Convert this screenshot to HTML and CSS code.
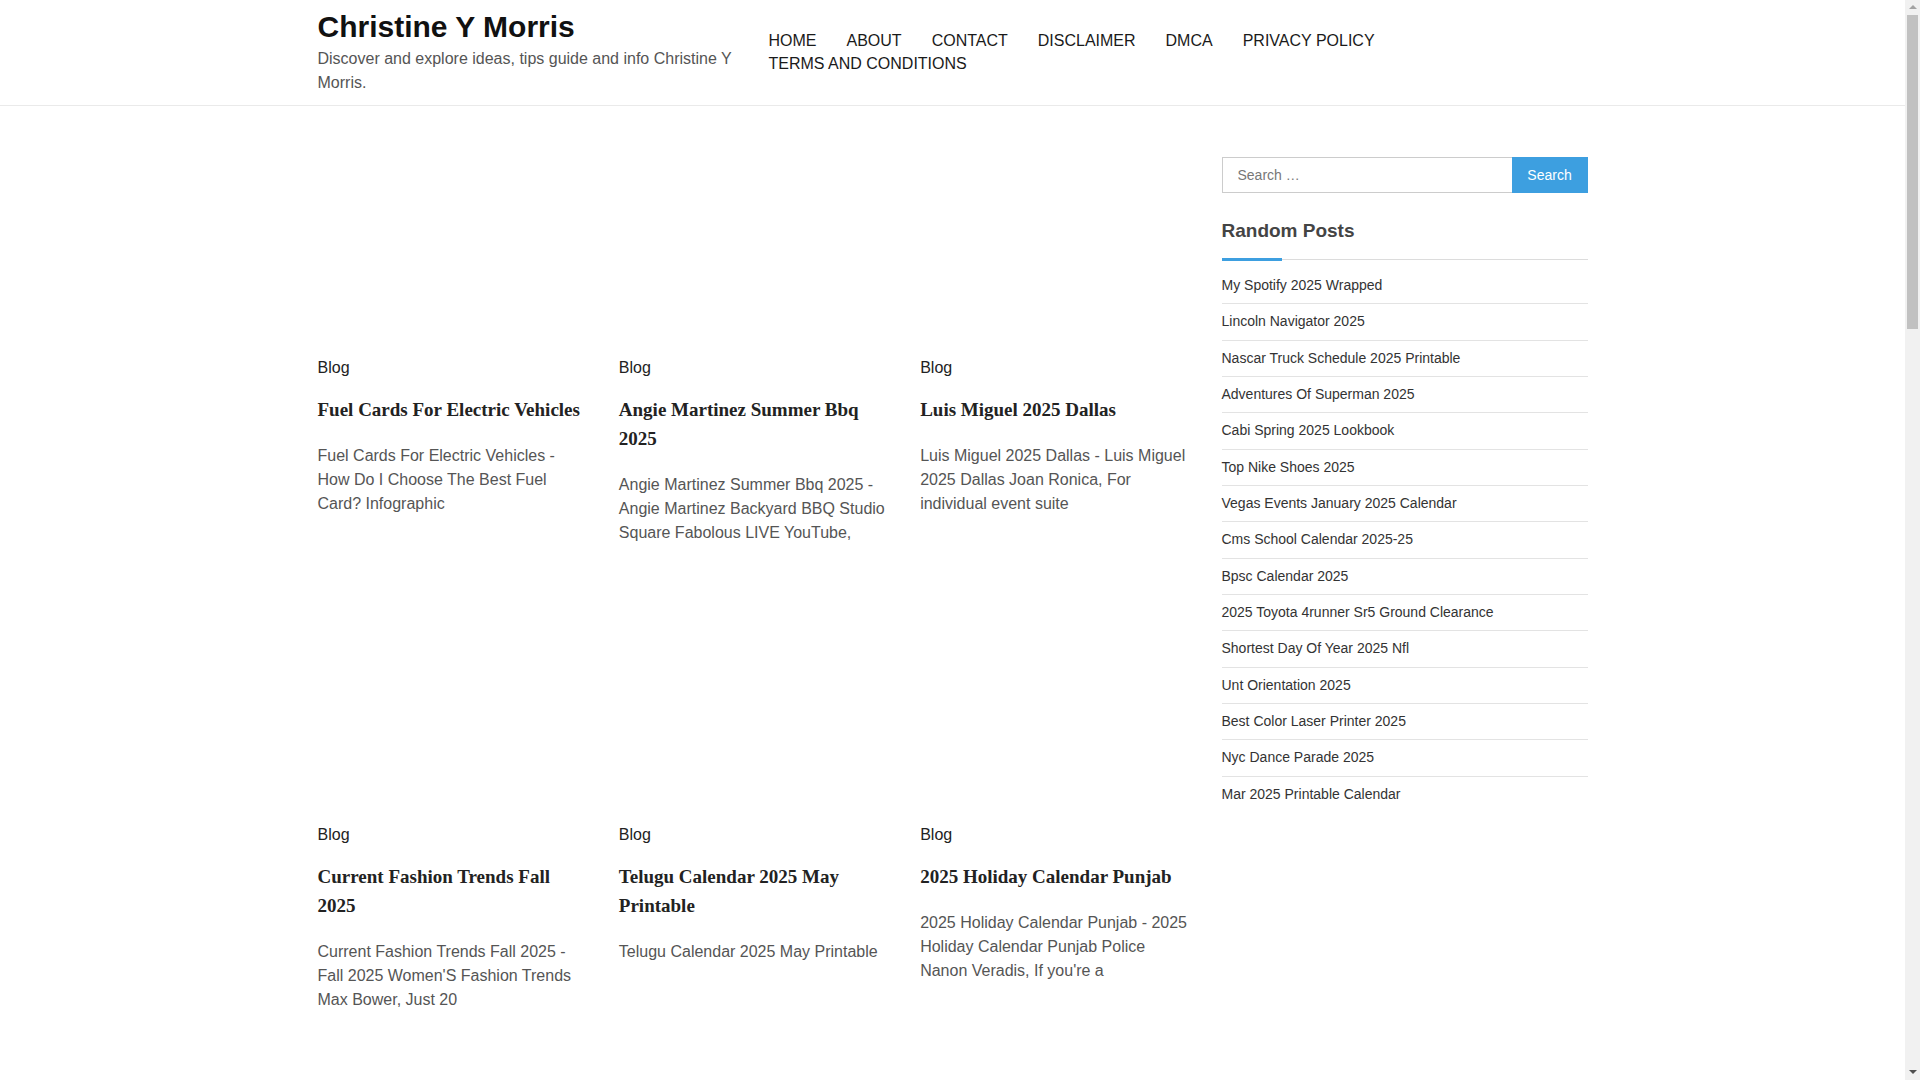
FILE: index.html
```html
<!DOCTYPE html>
<html lang="en">
<head>
<meta charset="utf-8">
<title>Christine Y Morris</title>
<link rel="stylesheet" href="styles.css">
</head>
<body>
<div class="page">
<header class="site-header">
  <div class="header-inner">
    <div class="branding">
      <p class="site-title">Christine Y Morris</p>
      <p class="site-desc">Discover and explore ideas, tips guide and info Christine Y Morris.</p>
    </div>
    <nav class="main-nav">
      <ul>
        <li>HOME</li>
        <li>ABOUT</li>
        <li>CONTACT</li>
        <li>DISCLAIMER</li>
        <li>DMCA</li>
        <li>PRIVACY POLICY</li>
        <li>TERMS AND CONDITIONS</li>
      </ul>
    </nav>
  </div>
</header>

<div class="site-content">
  <main class="posts">
    <article class="post">
      <div class="thumb"></div>
      <div class="cat">Blog</div>
      <h2 class="entry-title">Fuel Cards For Electric Vehicles</h2>
      <p class="excerpt">Fuel Cards For Electric Vehicles - How Do I Choose The Best Fuel Card? Infographic</p>
    </article>
    <article class="post">
      <div class="thumb"></div>
      <div class="cat">Blog</div>
      <h2 class="entry-title">Angie Martinez Summer Bbq 2025</h2>
      <p class="excerpt">Angie Martinez Summer Bbq 2025 - Angie Martinez Backyard BBQ Studio Square Fabolous LIVE YouTube,</p>
    </article>
    <article class="post">
      <div class="thumb"></div>
      <div class="cat">Blog</div>
      <h2 class="entry-title">Luis Miguel 2025 Dallas</h2>
      <p class="excerpt">Luis Miguel 2025 Dallas - Luis Miguel 2025 Dallas Joan Ronica, For individual event suite</p>
    </article>
    <article class="post">
      <div class="thumb"></div>
      <div class="cat">Blog</div>
      <h2 class="entry-title">Current Fashion Trends Fall 2025</h2>
      <p class="excerpt">Current Fashion Trends Fall 2025 - Fall 2025 Women'S Fashion Trends Max Bower, Just 20</p>
    </article>
    <article class="post">
      <div class="thumb"></div>
      <div class="cat">Blog</div>
      <h2 class="entry-title">Telugu Calendar 2025 May Printable</h2>
      <p class="excerpt">Telugu Calendar 2025 May Printable</p>
    </article>
    <article class="post">
      <div class="thumb"></div>
      <div class="cat">Blog</div>
      <h2 class="entry-title">2025 Holiday Calendar Punjab</h2>
      <p class="excerpt">2025 Holiday Calendar Punjab - 2025 Holiday Calendar Punjab Police Nanon Veradis, If you're a</p>
    </article>
  </main>

  <aside class="sidebar">
    <form class="search-form">
      <input class="search-field" type="search" placeholder="Search …">
      <button class="search-submit" type="button">Search</button>
    </form>
    <section class="widget">
      <h3 class="widget-title">Random Posts</h3>
      <ul class="widget-list">
        <li>My Spotify 2025 Wrapped</li>
        <li>Lincoln Navigator 2025</li>
        <li>Nascar Truck Schedule 2025 Printable</li>
        <li>Adventures Of Superman 2025</li>
        <li>Cabi Spring 2025 Lookbook</li>
        <li>Top Nike Shoes 2025</li>
        <li>Vegas Events January 2025 Calendar</li>
        <li>Cms School Calendar 2025-25</li>
        <li>Bpsc Calendar 2025</li>
        <li>2025 Toyota 4runner Sr5 Ground Clearance</li>
        <li>Shortest Day Of Year 2025 Nfl</li>
        <li>Unt Orientation 2025</li>
        <li>Best Color Laser Printer 2025</li>
        <li>Nyc Dance Parade 2025</li>
        <li>Mar 2025 Printable Calendar</li>
      </ul>
    </section>
  </aside>
</div>
</div>

<div class="fake-scrollbar" aria-hidden="true">
  <span class="sb-arrow sb-up"></span>
  <span class="sb-thumb"></span>
  <span class="sb-arrow sb-down"></span>
</div>
</body>
</html>
```

FILE: styles.css
```css
* {
  box-sizing: border-box;
}

html, body {
  margin: 0;
  padding: 0;
  background: #fff;
}

body {
  font-family: "Liberation Sans", Arial, sans-serif;
  font-size: 16px;
  line-height: 24px;
  color: #222;
}

.page {
  margin-right: 15px;
}

/* Header */
.site-header {
  border-bottom: 1px solid #eaeaea;
}

.header-inner {
  max-width: 1300px;
  margin: 0 auto;
  padding: 9px 15px 10px;
  display: flex;
  align-items: center;
}

.branding {
  flex: none;
  width: 445px;
}

.site-title {
  margin: 0;
  font-size: 30px;
  line-height: 36px;
  font-weight: bold;
  color: #111;
}

.site-desc {
  margin: 2px 0 0;
  font-size: 16px;
  line-height: 24px;
  color: #555;
}

.main-nav {
  flex: 1;
  margin-left: 6px;
}

.main-nav ul {
  list-style: none;
  margin: 0;
  padding: 0;
  display: flex;
  flex-wrap: wrap;
}

.main-nav li {
  margin-right: 30px;
  font-size: 16px;
  line-height: 23px;
  color: #1a1a1a;
}

/* Content */
.site-content {
  max-width: 1300px;
  margin: 0 auto;
  padding: 51px 15px 0;
  display: grid;
  grid-template-columns: 1fr 366px;
  column-gap: 30px;
  align-items: start;
  min-height: 3500px;
}

.posts {
  display: grid;
  grid-template-columns: repeat(3, 1fr);
  column-gap: 30px;
  row-gap: 79px;
  align-items: start;
}

.thumb {
  height: 199px;
}

.cat {
  font-size: 16px;
  line-height: 24px;
  color: #222;
}

.entry-title {
  margin: 15px 0 20px;
  font-family: "Liberation Serif", "Times New Roman", serif;
  font-size: 19px;
  line-height: 29px;
  font-weight: bold;
  color: #222;
}

.excerpt {
  margin: 0;
  font-size: 16px;
  line-height: 24px;
  color: #555;
}

/* Sidebar */
.search-form {
  display: flex;
  height: 36px;
}

.search-field {
  flex: 1;
  min-width: 0;
  height: 36px;
  margin: 0;
  padding: 0 15px;
  border: 1px solid #ccc;
  border-right: none;
  border-radius: 0;
  font-family: "Liberation Sans", Arial, sans-serif;
  font-size: 14px;
  color: #333;
  background: #fff;
  outline: none;
  -webkit-appearance: none;
}

.search-field::placeholder {
  color: #777;
}

.search-submit {
  flex: none;
  width: 76px;
  height: 36px;
  margin: 0;
  padding: 0;
  border: none;
  border-radius: 0;
  background: #3d9fe0;
  color: #fff;
  font-family: "Liberation Sans", Arial, sans-serif;
  font-size: 14px;
}

.widget {
  margin-top: 24px;
}

.widget-title {
  position: relative;
  margin: 0;
  padding-bottom: 14px;
  font-size: 19px;
  line-height: 28px;
  font-weight: bold;
  color: #444;
  border-bottom: 1px solid #dcdcdc;
}

.widget-title::after {
  content: "";
  position: absolute;
  left: 0;
  bottom: -2px;
  width: 60px;
  height: 3px;
  background: #3d9fe0;
}

.widget-list {
  list-style: none;
  margin: 8px 0 0;
  padding: 0;
}

.widget-list li {
  padding: 7px 0;
  font-size: 14px;
  line-height: 21.33px;
  color: #333;
}

.widget-list li + li {
  border-top: 1px solid #e3e3e3;
}

/* Browser scrollbar look-alike */
.fake-scrollbar {
  position: fixed;
  top: 0;
  right: 0;
  width: 15px;
  height: 100vh;
  background: #f1f1f1;
  display: flex;
  flex-direction: column;
  align-items: center;
}

.sb-arrow {
  flex: none;
  width: 0;
  height: 0;
  border-left: 4px solid transparent;
  border-right: 4px solid transparent;
}

.sb-up {
  margin: 5px 0 5px;
  border-bottom: 4px solid #a3a3a3;
}

.sb-down {
  margin: auto 0 6px;
  border-top: 4px solid #505050;
}

.sb-thumb {
  flex: none;
  width: 11px;
  height: 314px;
  margin-top: 1px;
  background: #c1c1c1;
}
```
